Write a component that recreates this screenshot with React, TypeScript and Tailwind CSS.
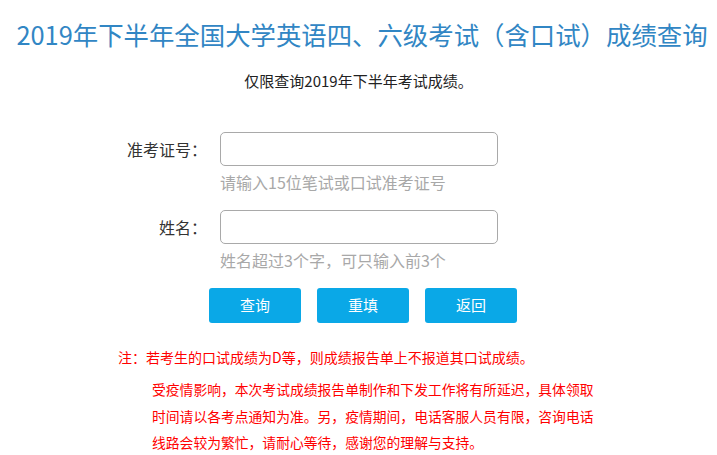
import React from 'react';

const font = { fontFamily: '"Noto Sans CJK SC", "Noto Sans", sans-serif' };

function FieldRow({ label, hint }: { label: string; hint: string }) {
    return (
        <div className="flex flex-col">
            <div className="flex items-center">
                <label className="w-[220px] pr-[13px] text-right text-[16px] leading-[20px] text-[#333]">
                    {label}
                </label>
                <input
                    type="text"
                    className="h-[34px] w-[278px] rounded-[5px] border border-[#a9a9a9] bg-white px-2 outline-none"
                />
            </div>
            <div className="mt-[6px] pl-[220px] text-[16px] leading-[20px] text-[#a8a8a8]">
                {hint}
            </div>
        </div>
    );
}

export default function App() {
    const buttons = ['查询', '重填', '返回'];

    return (
        <div className="min-h-[455px] w-[717px] bg-white" style={font}>
            <h1 className="pl-[7px] pt-[18px] text-center text-[25.4px] font-normal leading-[32px] text-[#3186c4]">
                2019年下半年全国大学英语四、六级考试（含口试）成绩查询
            </h1>

            <p className="mt-[21px] text-center text-[15px] leading-[20px] text-[#222]">
                仅限查询2019年下半年考试成绩。
            </p>

            <form className="mt-[41px] flex flex-col gap-[18px]">
                <FieldRow label="准考证号：" hint="请输入15位笔试或口试准考证号" />
                <FieldRow label="姓名：" hint="姓名超过3个字，可只输入前3个" />
            </form>

            <div className="mt-[18px] flex gap-[16px] pl-[209px]">
                {buttons.map((b) => (
                    <button
                        key={b}
                        className="h-[35px] w-[92px] rounded-[3px] bg-[#0aa8e7] text-[15px] text-white"
                    >
                        {b}
                    </button>
                ))}
            </div>

            <p className="mt-[24px] pl-[118px] text-[14px] leading-[20px] text-[#ff0000]">
                注：若考生的口试成绩为D等，则成绩报告单上不报道其口试成绩。
            </p>
            <p className="mt-[9px] ml-[152px] w-[444px] text-[13.8px] leading-[26.5px] text-[#ff0000]">
                受疫情影响，本次考试成绩报告单制作和下发工作将有所延迟，具体领取时间请以各考点通知为准。另，疫情期间，电话客服人员有限，咨询电话线路会较为繁忙，请耐心等待，感谢您的理解与支持。
            </p>
        </div>
    );
}
